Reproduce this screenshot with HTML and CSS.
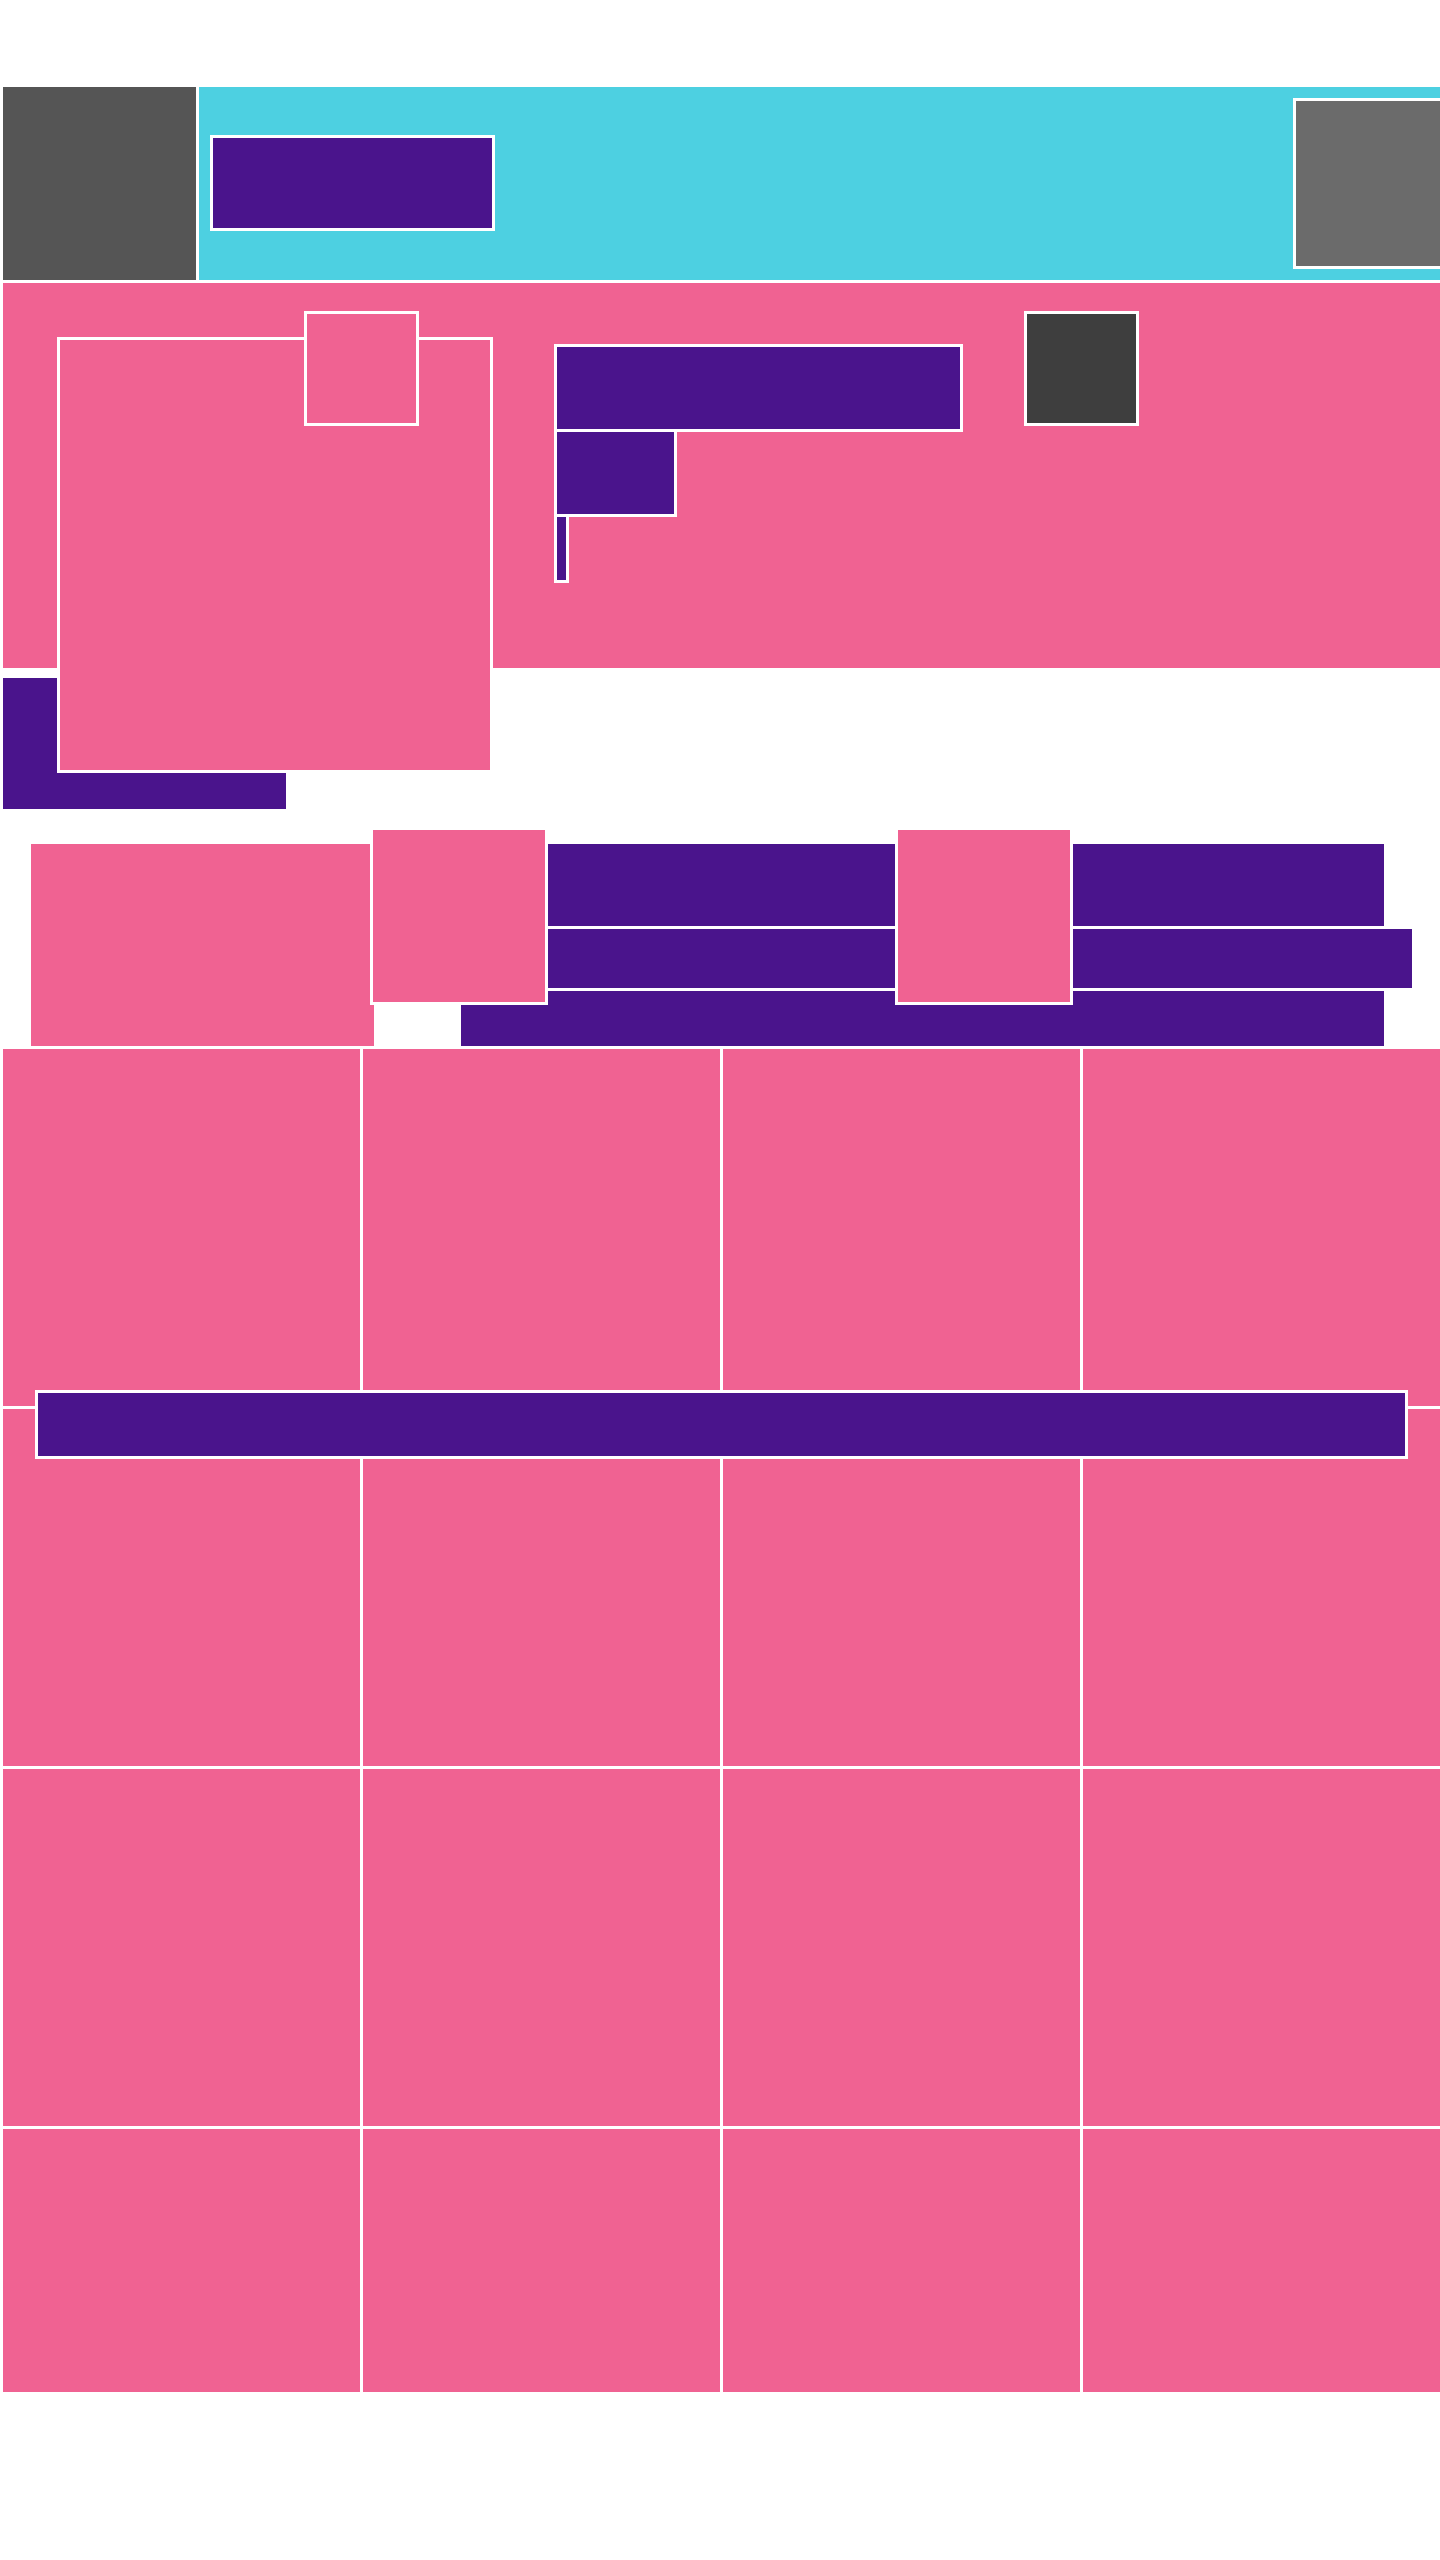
FILE: index.html
```html
<!DOCTYPE html>
<html lang="en">
<head>
    <meta charset="UTF-8">
    <meta name="viewport" content="width=device-width, initial-scale=1.0">
    <title>Gallery</title>
    <link rel="stylesheet" href="styles.css">
</head>
<body>
    <div class="page">
        <!-- Top bar -->
        <header class="topbar">
            <div class="logo"></div>
            <nav class="navbar">
                <div class="brand"></div>
                <div class="avatar"></div>
            </nav>
        </header>

        <!-- Hero -->
        <section class="hero">
            <div class="cover">
                <div class="badge"></div>
            </div>
            <div class="info">
                <div class="title"></div>
                <div class="subtitle"></div>
                <div class="tick"></div>
            </div>
            <div class="thumb"></div>
        </section>
        <div class="tag"></div>

        <!-- Intro -->
        <section class="intro">
            <div class="lead"></div>
            <div class="lines">
                <div class="line line-1"></div>
                <div class="line line-2"></div>
                <div class="line line-3"></div>
            </div>
            <div class="pic pic-a"></div>
            <div class="pic pic-b"></div>
        </section>

        <!-- Grid -->
        <section class="grid">
            <div class="cell"></div>
            <div class="cell"></div>
            <div class="cell"></div>
            <div class="cell"></div>
            <div class="cell"></div>
            <div class="cell"></div>
            <div class="cell"></div>
            <div class="cell"></div>
            <div class="cell"></div>
            <div class="cell"></div>
            <div class="cell"></div>
            <div class="cell"></div>
            <div class="cell"></div>
            <div class="cell"></div>
            <div class="cell"></div>
            <div class="cell"></div>
            <div class="banner"></div>
        </section>
    </div>
</body>
</html>
```

FILE: styles.css
```css
body {
    margin: 0;
    font-family: "Liberation Sans", Arial, sans-serif;
    background: #fff;
}
.page {
    width: 1440px;
    overflow: hidden;
    padding-top: 87px;
}

/* top bar */
.topbar {
    display: flex;
    gap: 3px;
    padding-left: 3px;
    height: 193px;
}
.logo {
    width: 193px;
    background: #555555;
}
.navbar {
    flex: 1;
    display: flex;
    align-items: flex-start;
    justify-content: space-between;
    padding-left: 11px;
    background: #4dd0e1;
}
.brand {
    width: 285px;
    height: 96px;
    margin-top: 48px;
    box-sizing: border-box;
    border: 3px solid #fff;
    background: #4a148c;
}
.avatar {
    width: 171px;
    height: 171px;
    margin-top: 11px;
    margin-right: -24px;
    box-sizing: border-box;
    border: 3px solid #fff;
    background: #6b6b6b;
}

/* hero */
.hero {
    margin: 3px 0 0 3px;
    height: 385px;
    box-sizing: border-box;
    padding: 28px 0 0 54px;
    display: flex;
    align-items: flex-start;
    gap: 61px;
    background: #f06292;
}
.cover {
    position: relative;
    z-index: 1;
    flex: none;
    width: 436px;
    height: 436px;
    margin-top: 26px;
    box-sizing: border-box;
    border: 3px solid #fff;
    background: #f06292;
}
.badge {
    position: absolute;
    left: 244px;
    top: -29px;
    width: 115px;
    height: 115px;
    box-sizing: border-box;
    border: 3px solid #fff;
    background: #f06292;
}
.info {
    width: 409px;
    margin-top: 33px;
}
.title, .subtitle, .tick {
    box-sizing: border-box;
    border: 3px solid #fff;
    background: #4a148c;
}
.title {
    height: 88px;
}
.subtitle {
    width: 123px;
    height: 88px;
    margin-top: -3px;
}
.tick {
    width: 15px;
    height: 69px;
    margin-top: -3px;
}
.thumb {
    flex: none;
    width: 115px;
    height: 115px;
    box-sizing: border-box;
    border: 3px solid #fff;
    background: #3e3e3e;
}
.tag {
    width: 283px;
    height: 131px;
    margin: 10px 0 0 3px;
    background: #4a148c;
}

/* intro */
.intro {
    position: relative;
    display: flex;
    height: 202px;
    margin-top: 35px;
}
.lead {
    width: 343px;
    margin-left: 31px;
    background: #f06292;
}
.lines {
    display: flex;
    flex-direction: column;
    gap: 3px;
    margin-left: 87px;
}
.line {
    width: 923px;
    background: #4a148c;
}
.line-1 {
    height: 82px;
}
.line-2 {
    width: 951px;
    height: 59px;
}
.line-3 {
    height: 55px;
}
.pic {
    position: absolute;
    top: -17px;
    width: 178px;
    height: 178px;
    box-sizing: border-box;
    border: 3px solid #fff;
    background: #f06292;
}
.pic-a {
    left: 370px;
}
.pic-b {
    left: 895px;
}

/* grid */
.grid {
    position: relative;
    display: grid;
    grid-template-columns: repeat(4, 357px);
    grid-template-rows: repeat(3, 357px) 263px;
    gap: 3px;
    margin-top: 3px;
    padding-left: 3px;
}
.cell {
    background: #f06292;
}
.banner {
    position: absolute;
    left: 35px;
    top: 341px;
    width: 1373px;
    height: 69px;
    box-sizing: border-box;
    border: 3px solid #fff;
    background: #4a148c;
}
```
